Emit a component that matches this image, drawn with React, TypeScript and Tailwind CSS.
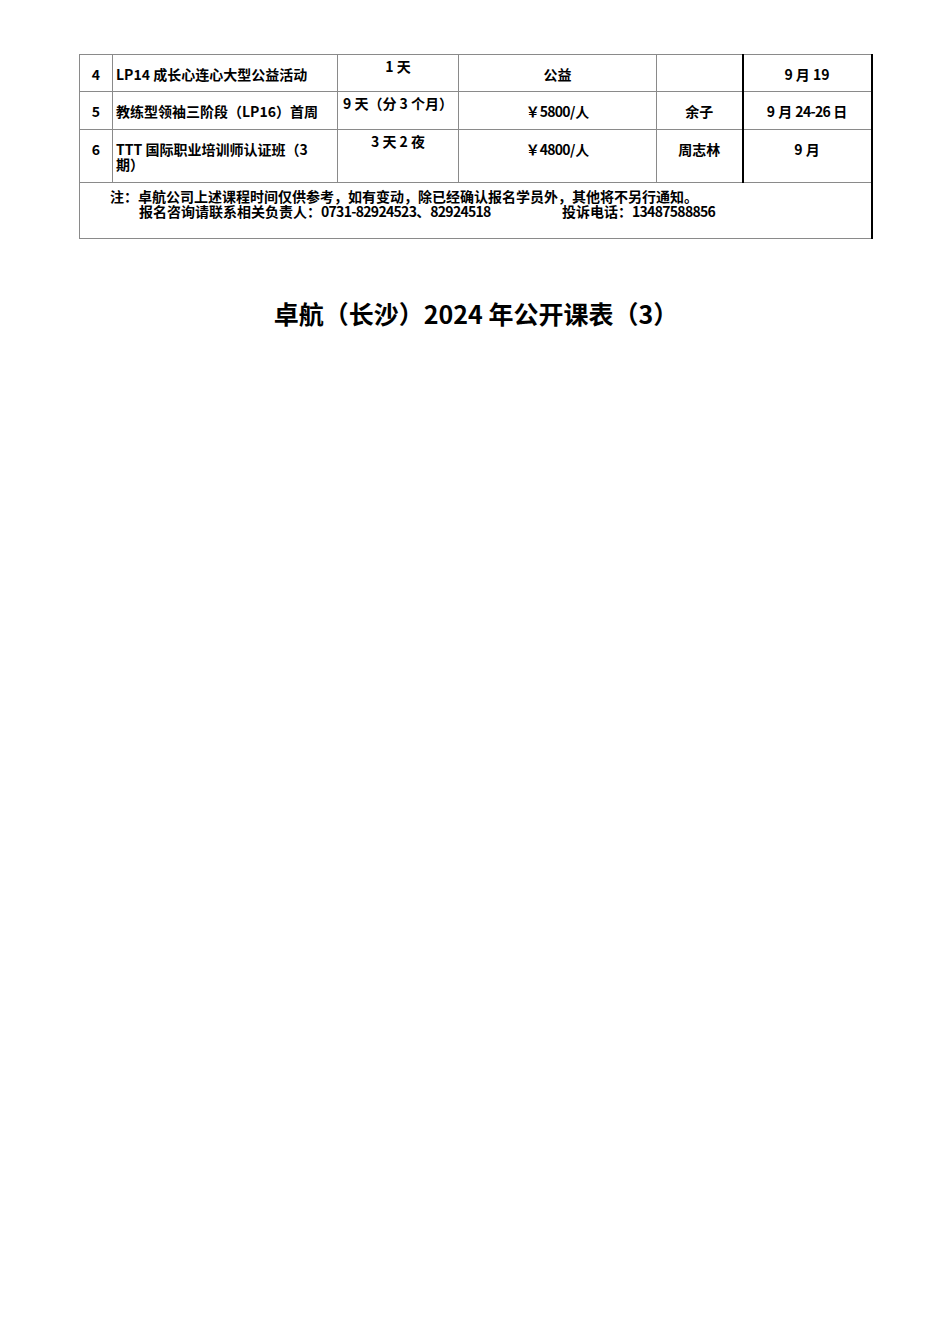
import React from "react";

const font = { fontFamily: '"Noto Sans CJK SC", "Noto Sans", sans-serif' };

export default function App() {
  const g = "border border-[#8a8a8a]";
  const cell = `${g} align-top p-0 pt-[12px] leading-[15px]`;
  const cellTop = `${g} align-top p-0 pt-[4px] leading-[15px]`;
  const dark = "border-l-2 border-l-black";
  const right = "border-r-2 border-r-black";
  const num = "tracking-[-0.7px]";
  return (
    <div className="bg-white w-[950px] min-h-[1344px] text-black text-[14px] font-semibold" style={font}>
      <div className="pt-[54px] pl-[79px]">
        <table className="table-fixed border-collapse w-[792px]">
          <colgroup>
            <col className="w-[33px]" />
            <col className="w-[225px]" />
            <col className="w-[121px]" />
            <col className="w-[198px]" />
            <col className="w-[86px]" />
            <col className="w-[129px]" />
          </colgroup>
          <tbody>
            <tr className="h-[37px]">
              <td className={`${cell} text-center`}>4</td>
              <td className={`${cell} pl-[3px]`}>LP14 成长心连心大型公益活动</td>
              <td className={`${cellTop} text-center`}>1 天</td>
              <td className={`${cell} text-center`}>公益</td>
              <td className={`${cell} text-center`}></td>
              <td className={`${cell} ${dark} ${right} text-center`}>9 月 19</td>
            </tr>
            <tr className="h-[38px]">
              <td className={`${cell} text-center`}>5</td>
              <td className={`${cell} pl-[3px]`}>教练型领袖三阶段（LP16）首周</td>
              <td className={`${cellTop} text-center`}>9 天（分 3 个月）</td>
              <td className={`${cell} text-center`}>￥<span className={num}>5800</span>/人</td>
              <td className={`${cell} text-center`}>余子</td>
              <td className={`${cell} ${dark} ${right} text-center`}>9 月 <span className={num}>24-26</span> 日</td>
            </tr>
            <tr className="h-[53px]">
              <td className={`${cell} text-center`}>6</td>
              <td className={`${cell} pl-[3px]`}>
                TTT 国际职业培训师认证班（3
                <br />
                期）
              </td>
              <td className={`${cellTop} text-center`}>3 天 2 夜</td>
              <td className={`${cell} text-center`}>￥<span className={num}>4800</span>/人</td>
              <td className={`${cell} text-center`}>周志林</td>
              <td className={`${cell} ${dark} ${right} text-center`}>9 月</td>
            </tr>
            <tr className="h-[56px]">
              <td colSpan={6} className={`${g} ${right} align-top p-0 pt-[6px] leading-[15px]`}>
                <div className="pl-[30px]">注：卓航公司上述课程时间仅供参考，如有变动，除已经确认报名学员外，其他将不另行通知。</div>
                <div className="pl-[59px] flex">
                  <span className="inline-block w-[423px]">
                    报名咨询请联系相关负责人：<span className={num}>0731-82924523</span>、<span className={num}>82924518</span>
                  </span>
                  <span>
                    投诉电话：<span className={num}>13487588856</span>
                  </span>
                </div>
              </td>
            </tr>
          </tbody>
        </table>
      </div>
      <div className="mt-[58px] w-[950px] pl-[2px] text-center text-[25px] font-bold leading-[32px]">
        卓航（长沙）2024 年公开课表（3）
      </div>
    </div>
  );
}
